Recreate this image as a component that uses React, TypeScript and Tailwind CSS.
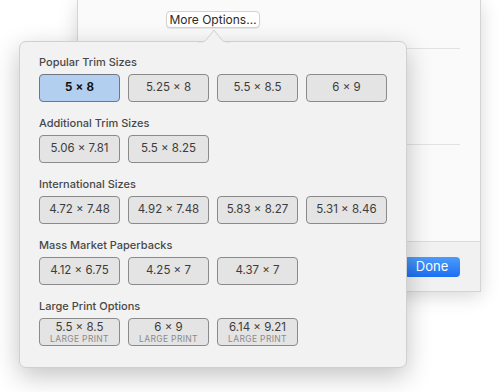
import React from "react";

const font = { fontFamily: "Inter, 'Noto Sans', 'Liberation Sans', sans-serif" };

type Btn = { label: string; selected?: boolean; large?: boolean };

const sections: { title: string; items: Btn[] }[] = [
  {
    title: "Popular Trim Sizes",
    items: [{ label: "5 × 8", selected: true }, { label: "5.25 × 8" }, { label: "5.5 × 8.5" }, { label: "6 × 9" }],
  },
  { title: "Additional Trim Sizes", items: [{ label: "5.06 × 7.81" }, { label: "5.5 × 8.25" }] },
  {
    title: "International Sizes",
    items: [{ label: "4.72 × 7.48" }, { label: "4.92 × 7.48" }, { label: "5.83 × 8.27" }, { label: "5.31 × 8.46" }],
  },
  { title: "Mass Market Paperbacks", items: [{ label: "4.12 × 6.75" }, { label: "4.25 × 7" }, { label: "4.37 × 7" }] },
  {
    title: "Large Print Options",
    items: [
      { label: "5.5 × 8.5", large: true },
      { label: "6 × 9", large: true },
      { label: "6.14 × 9.21", large: true },
    ],
  },
];

function SizeButton({ b }: { b: Btn }) {
  if (b.selected) {
    return (
      <div className="h-[28px] rounded-[4px] border border-[#6f7784] bg-[#b3cfef] flex items-center justify-center text-[11.5px] font-bold tracking-[0.02em] text-[#111]">
        {b.label}
      </div>
    );
  }
  if (b.large) {
    return (
      <div className="h-[28px] rounded-[4px] border border-[#8a8a8a] bg-[#e4e4e4] flex flex-col items-center justify-center pt-px">
        <span className="text-[11.5px] leading-[13px] text-[#3c3c3c]">{b.label}</span>
        <span className="text-[8.5px] leading-[11px] tracking-[0.04em] text-[#8a8a8a]">LARGE PRINT</span>
      </div>
    );
  }
  return (
    <div className="h-[28px] rounded-[4px] border border-[#8a8a8a] bg-[#e4e4e4] flex items-center justify-center text-[11.5px] text-[#3c3c3c]">
      {b.label}
    </div>
  );
}

export default function App() {
  return (
    <div className="relative w-[500px] h-[392px] bg-white overflow-hidden" style={font}>
      {/* background window */}
      <div className="absolute left-[77px] top-0 w-[404px] h-[292px] bg-[#fafafa] border-l border-r border-b border-[#d4d4d4] shadow-[0_4px_18px_rgba(0,0,0,0.16)] flex flex-col">
        <div className="pt-[11px] pl-[88px]">
          <div className="w-[94px] h-[17px] rounded-[4px] border border-[#d2d2d2] bg-white shadow-[0_1px_1px_rgba(0,0,0,0.08)] flex items-center justify-center text-[12px] text-[#2a2a2a]">
            More Options…
          </div>
        </div>
        <div className="mt-[20px] mx-[20px] h-px bg-[#e2e2e2]" />
        <div className="mt-[95px] mx-[20px] h-px bg-[#e2e2e2]" />
        <div className="flex-1" />
        <div className="h-[50px] border-t border-[#dcdcdc] bg-[#f1f1f1] flex items-center justify-end pr-[20px]">
          <div className="w-[56px] h-[20px] rounded-[4px] bg-gradient-to-b from-[#4d9bfb] to-[#1b6ff3] flex items-center justify-center text-[13px] text-white">
            Done
          </div>
        </div>
      </div>

      {/* popover */}
      <div className="absolute left-[19px] top-[41px] w-[388px] h-[327px] rounded-[7px] bg-[#f2f2f2] border border-[#d0d0d0] shadow-[0_8px_26px_rgba(0,0,0,0.24)] pl-[19px] pr-[19px] pt-[12px]">
        <svg className="absolute left-[178px] top-[-13px]" width="32" height="14" viewBox="0 0 32 14">
          <path d="M0 13.5 C5 13.5 7 12.5 9 10 L16 1 L23 10 C25 12.5 27 13.5 32 13.5" fill="#f2f2f2" stroke="#d0d0d0" strokeWidth="1" />
          <rect x="0" y="13.5" width="32" height="1" fill="#f2f2f2" />
        </svg>
        <div className="flex flex-col gap-[13px]">
          {sections.map((s) => (
            <div key={s.title} className="flex flex-col gap-[4px]">
              <div className="text-[11px] leading-[16px] font-medium text-[#484848]">{s.title}</div>
              <div className="grid grid-cols-[81px_81px_81px_81px] gap-[8px]">
                {s.items.map((b) => (
                  <SizeButton key={b.label} b={b} />
                ))}
              </div>
            </div>
          ))}
        </div>
      </div>
    </div>
  );
}
